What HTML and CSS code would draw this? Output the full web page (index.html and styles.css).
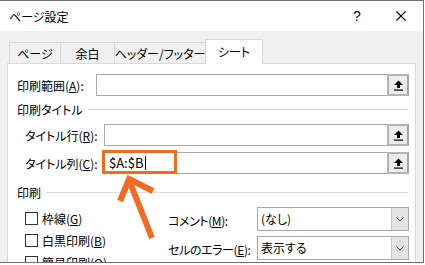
FILE: index.html
```html
<!DOCTYPE html>
<html lang="ja">
<head>
    <meta charset="UTF-8">
    <title>ページ設定</title>
    <link rel="stylesheet" href="styles.css">
</head>
<body>
<div class="win">
    <div class="titlebar">
        <span class="title">ページ設定</span>
        <span class="btn help">?</span>
        <span class="btn close">
            <svg width="10" height="10" viewBox="0 0 10 10"><path d="M0.5 0.5 L9.5 9.5 M9.5 0.5 L0.5 9.5" stroke="#000" stroke-width="1.1"/></svg>
        </span>
    </div>
    <div class="main">
        <div class="tabs">
            <div class="tab t1">ページ</div>
            <div class="tab t2">余白</div>
            <div class="tab t3">ヘッダー/フッター</div>
            <div class="tab t4 on">シート</div>
        </div>
        <div class="panel">
            <div class="row">
                <label>印刷範囲(<u>A</u>):</label>
                <div class="ref"><span class="val"></span><span class="pick"><svg width="9" height="11" viewBox="0 0 9 11"><path d="M4.5 0.5 L9 5 H6 V8 H3 V5 H0 Z" fill="#000"/><rect x="0" y="9.5" width="9" height="1.2" fill="#000"/></svg></span></div>
            </div>
            <div class="group g1"><span>印刷タイトル</span><i></i></div>
            <div class="row sub r2">
                <label>タイトル行(<u>R</u>):</label>
                <div class="ref"><span class="val"></span><span class="pick"><svg width="9" height="11" viewBox="0 0 9 11"><path d="M4.5 0.5 L9 5 H6 V8 H3 V5 H0 Z" fill="#000"/><rect x="0" y="9.5" width="9" height="1.2" fill="#000"/></svg></span></div>
            </div>
            <div class="row sub r3">
                <label>タイトル列(<u>C</u>):</label>
                <div class="ref"><span class="val"><span>$A:$B</span><b class="caret"></b></span><span class="pick"><svg width="9" height="11" viewBox="0 0 9 11"><path d="M4.5 0.5 L9 5 H6 V8 H3 V5 H0 Z" fill="#000"/><rect x="0" y="9.5" width="9" height="1.2" fill="#000"/></svg></span></div>
            </div>
            <div class="group g2"><span>印刷</span><i></i></div>
            <div class="print">
                <div class="checks">
                    <div class="check"><span class="box"></span><span>枠線(<u>G</u>)</span></div>
                    <div class="check"><span class="box"></span><span>白黒印刷(<u>B</u>)</span></div>
                    <div class="check"><span class="box"></span><span>簡易印刷(<u>Q</u>)</span></div>
                </div>
                <div class="combos">
                    <div class="combo">
                        <label>コメント(<u>M</u>):</label>
                        <div class="sel"><span>(なし)</span><span class="drop"><svg width="8" height="5" viewBox="0 0 8 5"><path d="M0.5 0.5 L4 4 L7.5 0.5" fill="none" stroke="#555" stroke-width="1"/></svg></span></div>
                    </div>
                    <div class="combo">
                        <label>セルのエラー(<u>E</u>):</label>
                        <div class="sel"><span>表示する</span><span class="drop"><svg width="8" height="5" viewBox="0 0 8 5"><path d="M0.5 0.5 L4 4 L7.5 0.5" fill="none" stroke="#555" stroke-width="1"/></svg></span></div>
                    </div>
                </div>
            </div>
        </div>
    </div>
</div>
<!-- 注釈 -->
<div class="mark"></div>
<svg class="arrow" width="425" height="265" viewBox="0 0 425 265">
    <path d="M129 180 L152 238" stroke="#f36b21" stroke-width="6" fill="none"/>
    <path d="M120 201 L129 179 L153 191" stroke="#f36b21" stroke-width="6" fill="none" stroke-linejoin="miter"/>
</svg>
</body>
</html>
```

FILE: styles.css
```css
* {margin:0; padding:0; box-sizing:border-box;}
body {background:#fff; font-family:"Noto Sans CJK JP", sans-serif; font-size:12px; color:#000; white-space:nowrap; font-feature-settings:"palt";}
u {text-decoration:underline; text-underline-offset:1px;}

.win {width:424px; height:263px; border:1px solid #6f6f6f; border-left:0; background:#f0f0f0; overflow:hidden;}
.titlebar {display:flex; align-items:center; height:30px; background:#fff; padding-left:9px;}
.title {flex:1;}
.btn {width:44px; height:30px; display:flex; align-items:center; justify-content:center;}
.help {font-family:"Liberation Sans", sans-serif; font-size:14px;}

.main {padding-top:8px;}
.tabs {display:flex; align-items:flex-end; height:24px; padding-left:9px;}
.tab {height:21px; border:1px solid #d9d9d9; border-bottom:0; margin-left:-1px; background:#f0f0f0; display:flex; align-items:center; justify-content:center;}
.tab.t1 {width:52px; margin-left:0;}
.tab.t2 {width:55px;}
.tab.t3 {width:92px;}
.tab.t4 {width:58px;}
.tab.on {height:25px; margin-bottom:-1px; background:#fff; position:relative; padding-bottom:2px;}

.panel {margin-left:7px; width:409px; height:220px; border:1px solid #d9d9d9; background:#fff; padding:10px 6px 0 9px;}
.row {display:flex; align-items:center; height:22px;}
.row label {width:79px;}
.row.sub {padding-left:8px;}
.row.r2 {margin-top:7px;}
.row.r3 {margin-top:6px;}
.ref {flex:1; height:22px; display:flex; border:1px solid #a9a9a9;}
.ref .val {flex:1; padding-left:4px; line-height:20px; font-size:13px; display:flex; align-items:center;}
.caret {display:inline-block; width:1px; height:14px; background:#000; margin-left:1px;}
.pick {width:22px; margin:-1px -1px -1px 0; border:2px solid #b4b4b4; border-right-color:#a4a4a4; background:#ececec; display:flex; align-items:center; justify-content:center;}

.group {display:flex; align-items:center; gap:5px; height:16px;}
.group i {flex:1; height:1px; background:#dcdcdc; margin-right:1px;}
.group.g1 {margin-top:5px;}
.group.g2 {margin-top:10px;}

.print {display:flex; margin-top:7px; padding-left:8px;}
.checks {width:143px;}
.check {display:flex; align-items:center; gap:4px; height:22px;}
.box {width:13px; height:13px; border:1px solid #333; background:#fff;}
.combos {flex:1; display:flex; flex-direction:column; gap:5px;}
.combo {display:flex; align-items:center; height:24px;}
.combo label {width:89px; padding-top:3px; letter-spacing:-0.4px;}
.sel {flex:1; height:24px; display:flex; border:1px solid #a9a9a9;}
.sel span {flex:1; padding-left:3px; line-height:22px;}
.sel .drop {flex:none; width:17px; padding:0; background:#e5e5e5; border-left:1px solid #c8c8c8; display:flex; align-items:center; justify-content:center;}

.mark {position:absolute; left:102px; top:150px; width:75px; height:24px; border:3px solid #f36b21;}
.arrow {position:absolute; left:0; top:0; pointer-events:none;}
```
